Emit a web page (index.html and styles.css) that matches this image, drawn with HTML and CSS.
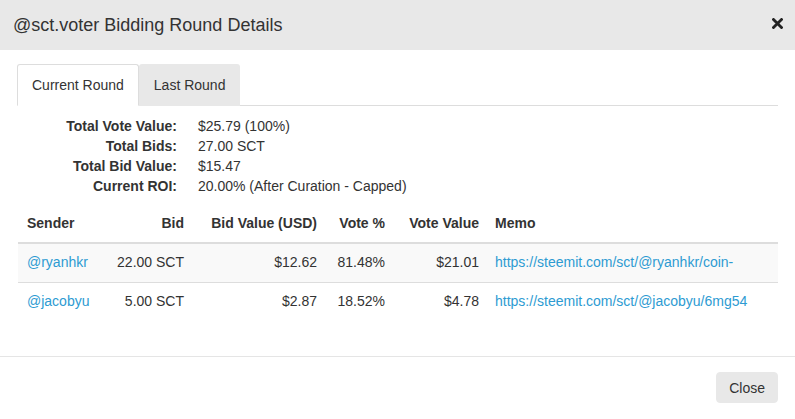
FILE: index.html
```html
<!DOCTYPE html>
<html lang="en">
<head>
  <meta charset="UTF-8">
  <meta name="viewport" content="width=device-width, initial-scale=1.0">
  <title>@sct.voter Bidding Round Details</title>
  <link rel="stylesheet" href="styles.css">
</head>
<body>
  <div class="modal">
    <div class="modal-header">
      <h4 class="modal-title">@sct.voter Bidding Round Details</h4>
      <button class="close" type="button" aria-label="Close">
        <svg width="11" height="11" viewBox="0 0 11 11"><path d="M1.5 1.5 L9.5 9.5 M9.5 1.5 L1.5 9.5" stroke="#222" stroke-width="2.8" stroke-linecap="square"/></svg>
      </button>
    </div>

    <div class="modal-body">
      <ul class="tabs">
        <li class="active"><a href="#">Current Round</a></li>
        <li><a href="#">Last Round</a></li>
      </ul>

      <!-- 라운드 요약 -->
      <dl class="stats">
        <dt>Total Vote Value:</dt><dd>$25.79 (100%)</dd>
        <dt>Total Bids:</dt><dd>27.00 SCT</dd>
        <dt>Total Bid Value:</dt><dd>$15.47</dd>
        <dt>Current ROI:</dt><dd>20.00% (After Curation - Capped)</dd>
      </dl>

      <table class="bids">
        <colgroup>
          <col class="c-sender"><col class="c-bid"><col class="c-value"><col class="c-pct"><col class="c-vote"><col class="c-memo">
        </colgroup>
        <thead>
          <tr>
            <th>Sender</th>
            <th class="num">Bid</th>
            <th class="num">Bid Value (USD)</th>
            <th class="num">Vote %</th>
            <th class="num">Vote Value</th>
            <th>Memo</th>
          </tr>
        </thead>
        <tbody>
          <tr>
            <td><a href="#">@ryanhkr</a></td>
            <td class="num">22.00 SCT</td>
            <td class="num">$12.62</td>
            <td class="num">81.48%</td>
            <td class="num">$21.01</td>
            <td class="memo"><a href="#">https://steemit.com/sct/@ryanhkr/coin-</a></td>
          </tr>
          <tr>
            <td><a href="#">@jacobyu</a></td>
            <td class="num">5.00 SCT</td>
            <td class="num">$2.87</td>
            <td class="num">18.52%</td>
            <td class="num">$4.78</td>
            <td class="memo"><a href="#">https://steemit.com/sct/@jacobyu/6mg54</a></td>
          </tr>
        </tbody>
      </table>
    </div>

    <div class="modal-footer">
      <button class="btn" type="button">Close</button>
    </div>
  </div>
</body>
</html>
```

FILE: styles.css
```css
* {margin:0; padding:0; box-sizing: border-box;}
ul,li,ol{
  list-style: none;
}

body{
  font-family: Arial, "Liberation Sans", sans-serif;
  font-size: 14px;
  line-height: 20px;
  color: #333;
  background: #fff;
}

a{
  color: #2d9bd2;
  text-decoration: none;
}

.modal{
  width: 795px;
}

.modal-header{
  display: flex;
  align-items: center;
  justify-content: space-between;
  height: 50px;
  padding: 0 12px 0 13px;
  background: #e8e8e8;
}

.modal-title{
  font-size: 18px;
  font-weight: normal;
  line-height: 20px;
  color: #333;
}

.close{
  border: 0;
  background: none;
  width: 11px;
  height: 11px;
  margin-top: -4px;
  display: flex;
}

.modal-body{
  padding: 14px 17px 15px 17px;
}

.tabs{
  display: flex;
  border-bottom: 1px solid #ddd;
}

.tabs > li{
  margin-bottom: -1px;
}

.tabs > li > a{
  display: block;
  padding: 10px 14px;
  line-height: 20px;
  color: #333;
  border: 1px solid transparent;
  border-radius: 3px 3px 0 0;
  background: #e8e8e8;
}

.tabs > li.active > a{
  background: #fff;
  border-color: #ddd #ddd transparent #ddd;
}

.stats{
  display: grid;
  grid-template-columns: 160px auto;
  column-gap: 21px;
  margin-top: 10px;
}

.stats > dt{
  font-weight: bold;
  text-align: right;
}

.bids{
  width: 760px;
  margin: 8px 0 20px 1px;
  border-collapse: collapse;
  table-layout: fixed;
}

.c-sender{width: 80px;}
.c-bid{width: 94px;}
.c-value{width: 133px;}
.c-pct{width: 68px;}
.c-vote{width: 94px;}
.c-memo{width: 291px;}

.bids th{
  text-align: left;
  font-weight: bold;
  padding: 9px 8px 9px 8px;
  border-bottom: 2px solid #ddd;
}

.bids td{
  padding: 8px 8px 10px 8px;
  border-top: 1px solid #ddd;
  white-space: nowrap;
}

.bids th:first-child,
.bids td:first-child{
  padding-left: 9px;
}

.bids tbody tr:nth-child(odd) td{
  background: #f9f9f9;
}

.bids .num{
  text-align: right;
}

.bids .memo{
  overflow: hidden;
}

.modal-footer{
  display: flex;
  justify-content: flex-end;
  padding: 15px 17px;
  border-top: 1px solid #e5e5e5;
}

.btn{
  font-family: Arial, "Liberation Sans", sans-serif;
  font-size: 14px;
  line-height: 20px;
  color: #333;
  padding: 5px 12px 4px;
  border: 1px solid #e8e8e8;
  border-radius: 4px;
  background: #e8e8e8;
}
```
